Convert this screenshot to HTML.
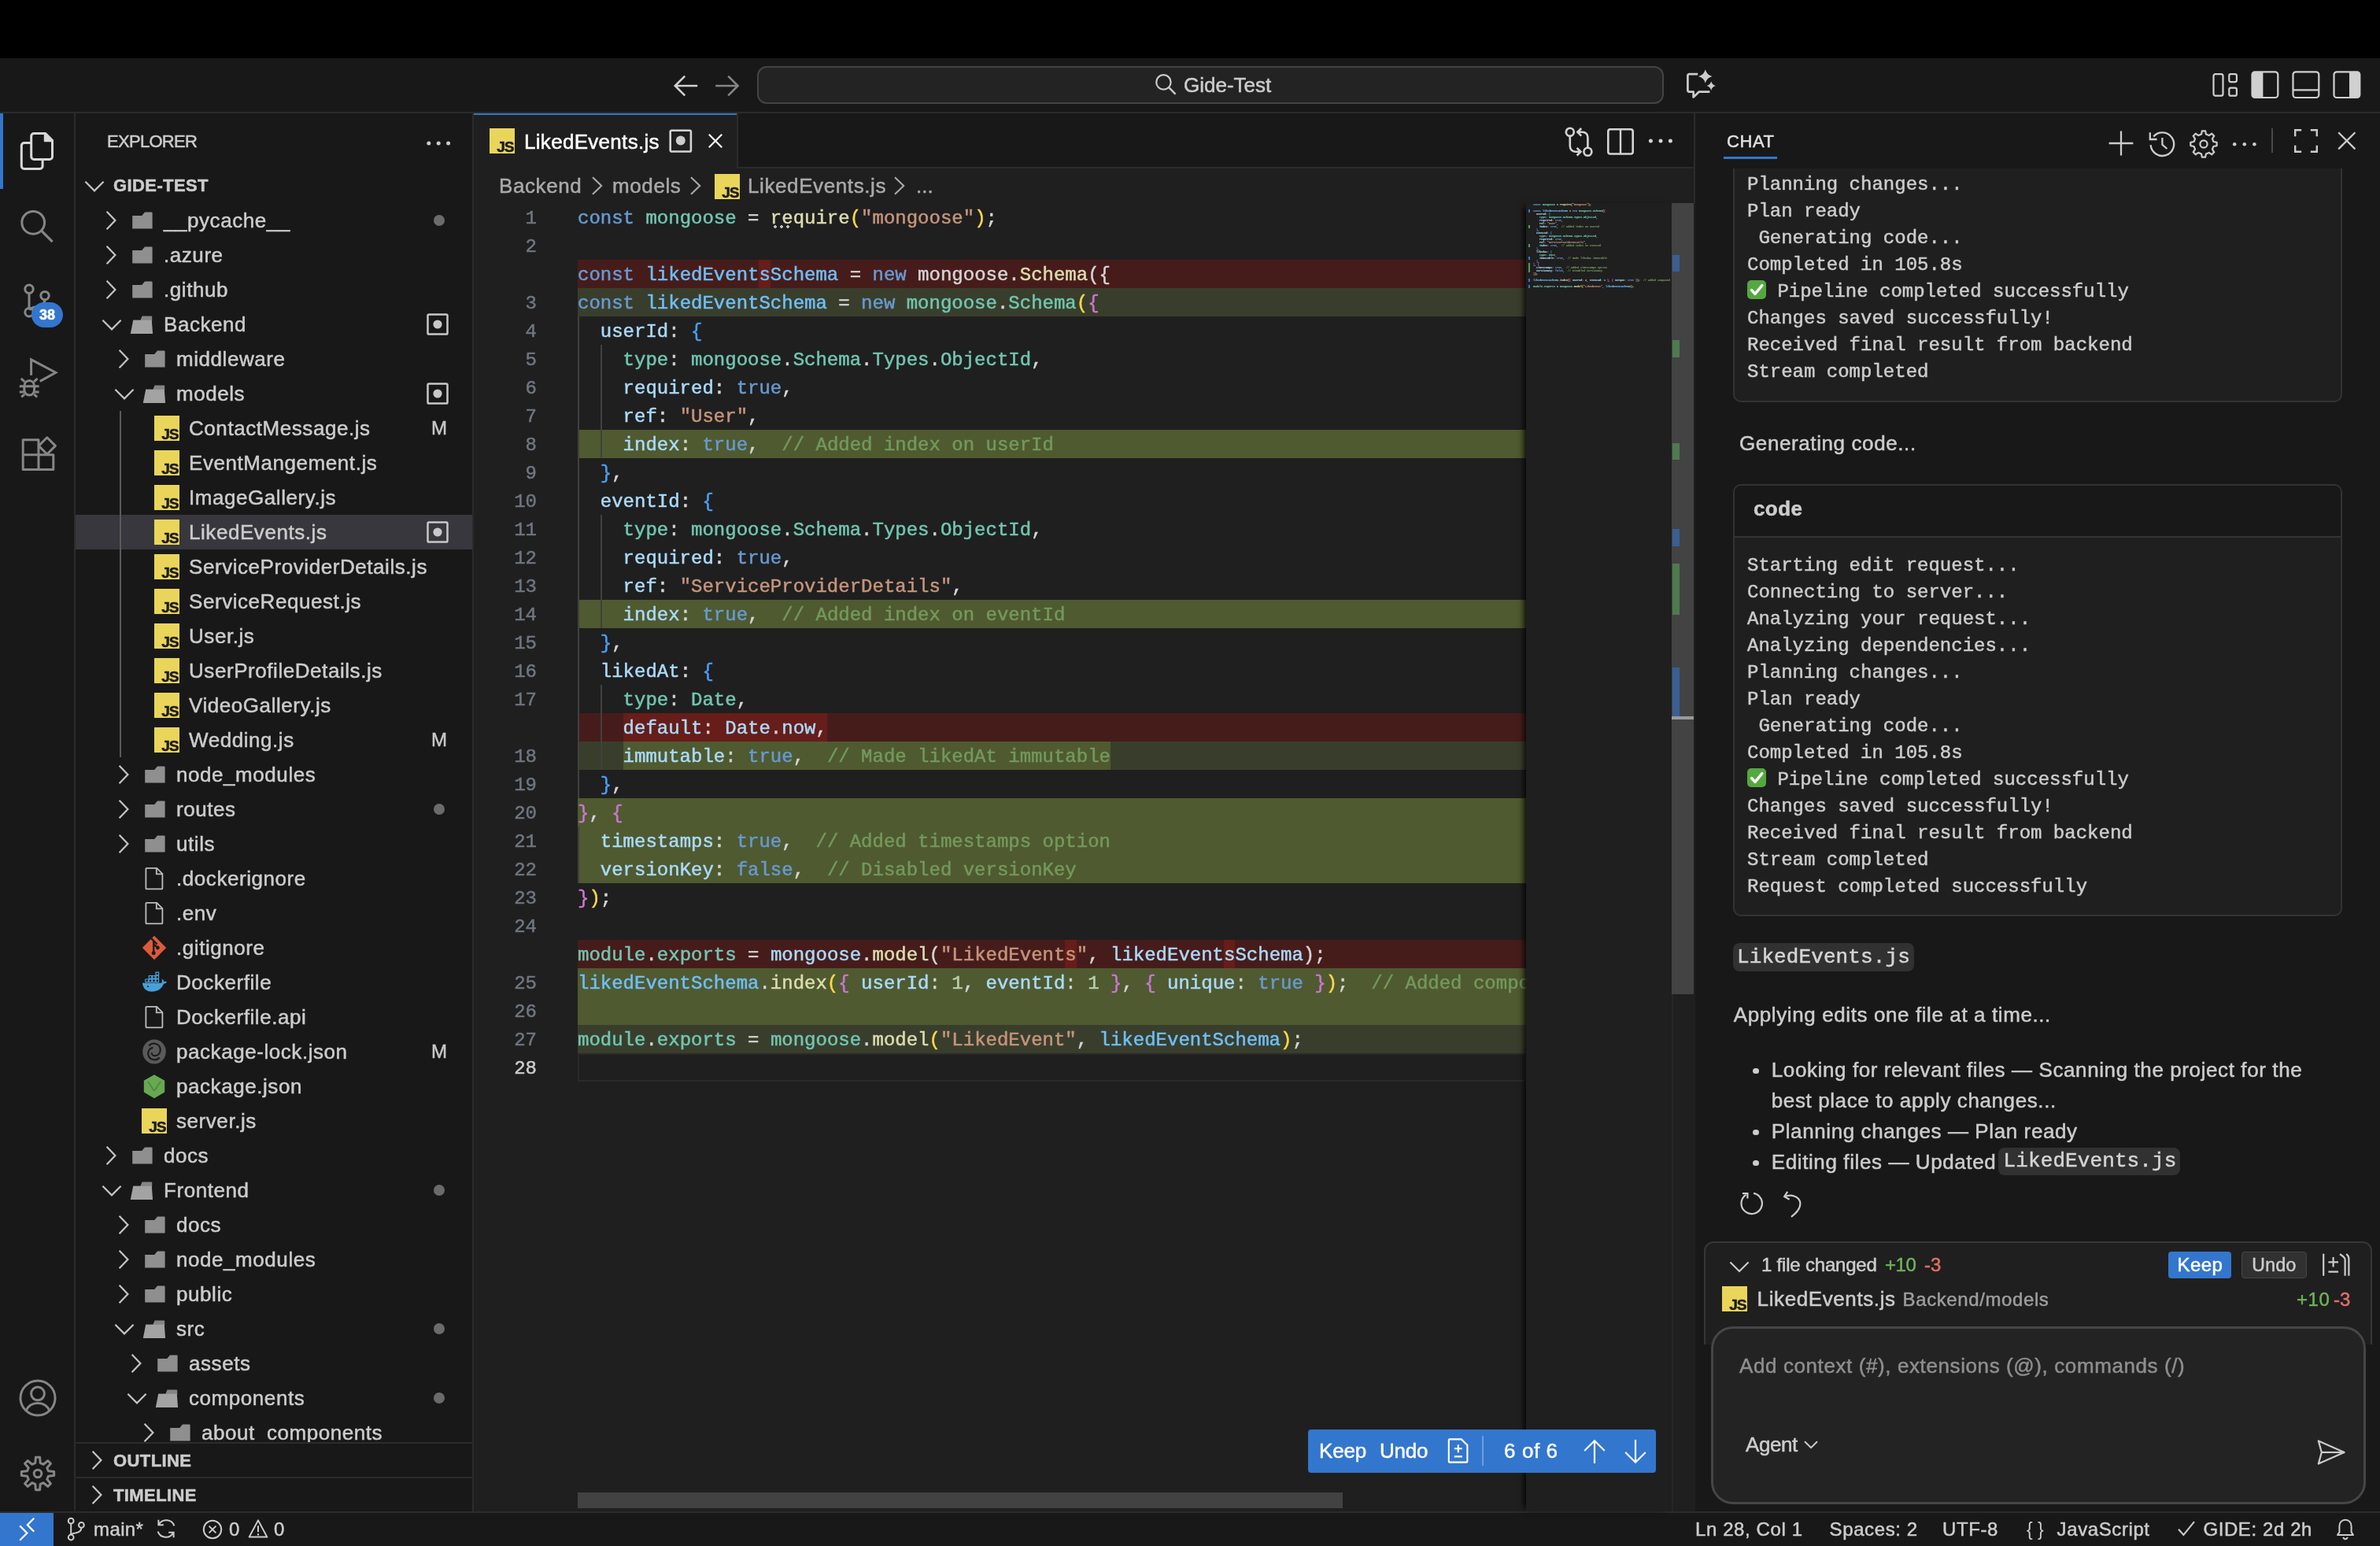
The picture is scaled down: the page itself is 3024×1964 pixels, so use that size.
<!DOCTYPE html><html><head><meta charset="utf-8"><style>
html,body{margin:0;padding:0;background:#000;overflow:hidden;width:3024px;height:1964px}
#root{position:absolute;left:0;top:0;width:1512px;height:982px;zoom:2;will-change:transform;-webkit-text-stroke:0.25px currentColor;background:#181818;font-family:"Liberation Sans",sans-serif;color:#cccccc;overflow:hidden;font-size:13px}
.a{position:absolute}
.mono{font-family:"Liberation Mono",monospace}
svg{position:absolute;overflow:visible}
.ln{position:absolute;left:301px;width:40px;text-align:right;height:18px;line-height:18px;font-family:"Liberation Mono",monospace;font-size:12px;color:#6f7680}
.cl{position:absolute;left:367px;height:18px;line-height:18px;font-family:"Liberation Mono",monospace;font-size:12px;white-space:pre;color:#cccccc}
.row{position:absolute;left:48px;width:252px;height:22px;line-height:22px;white-space:pre}
.lbl{position:absolute;top:0;letter-spacing:0.25px}
.k{color:#679ad1}.v{color:#aadafa}.c{color:#6fbff9}.f{color:#dcdcaf}.s{color:#c5947c}.t{color:#71c6b1}.cm{color:#74985c}.n{color:#bacdab}.p{color:#cccccc}.w{color:#d4d4d4}
.b1{color:#f9d849}.b2{color:#cc76d1}.b3{color:#4a9df8}
</style></head><body><div id="root"><div class="a" style="left:0;top:0;width:1512px;height:37px;background:#000"></div><div class="a" style="left:0;top:37px;width:1512px;height:34px;background:#181818;border-bottom:1px solid #2b2b2b"></div><svg style="left:427.5px;top:47px;width:17px;height:16px" viewBox="0 0 17 16" ><path d="M15.6 7.5H1.6M7.6 1.3L1.4 7.5l6.2 6.2" fill="none" stroke="#d0d0d0" stroke-width="1.3"/></svg><svg style="left:454px;top:47px;width:17px;height:16px" viewBox="0 0 17 16" ><path d="M0.6 7.5h14M8.6 1.3l6.2 6.2-6.2 6.2" fill="none" stroke="#858585" stroke-width="1.3"/></svg><div class="a" style="left:481px;top:42px;width:574px;height:22px;border:1px solid #444444;border-radius:6px;background:#232323"></div><svg style="left:733px;top:46px;width:15px;height:15px" viewBox="0 0 15 15" ><circle cx="6.2" cy="6.2" r="4.6" fill="none" stroke="#cccccc" stroke-width="1.1"/><path d="M9.6 9.6l4.2 4.2" stroke="#cccccc" stroke-width="1.2"/></svg><div class="a" style="left:752px;top:43px;height:22px;line-height:22px;font-size:13px;color:#cccccc;letter-spacing:0px">Gide-Test</div><svg style="left:1071px;top:45px;width:18px;height:18px" viewBox="0 0 18 18" ><path d="M7.6 2.1H2.2c-.6 0-1 .4-1 1v9.2c0 .6.4 1 1 1h2.6v3.4l3.6-3.4h6.8" fill="none" stroke="#cccccc" stroke-width="1.35" stroke-linejoin="round"/><path d="M12.4 -0.9000000000000004Q13.280000000000001 2.62 16.8 3.5Q13.280000000000001 4.38 12.4 7.9Q11.52 4.38 8.0 3.5Q11.52 2.62 12.4 -0.9000000000000004Z" fill="#cccccc"/><path d="M16.1 6.6Q16.68 8.92 19.0 9.5Q16.68 10.08 16.1 12.4Q15.520000000000001 10.08 13.200000000000001 9.5Q15.520000000000001 8.92 16.1 6.6Z" fill="#cccccc"/></svg><svg style="left:1405px;top:45px;width:18px;height:18px" viewBox="0 0 18 18" ><rect x="1.25" y="2.05" width="6.0" height="13.8" rx="1.2" fill="none" stroke="#d0d0d0" stroke-width="1.1"/><rect x="11.15" y="2.05" width="4.8" height="5.0" rx="1" fill="none" stroke="#d0d0d0" stroke-width="1.1"/><rect x="11.15" y="10.85" width="4.8" height="5.0" rx="1" fill="none" stroke="#d0d0d0" stroke-width="1.1"/></svg><svg style="left:1430px;top:45px;width:18px;height:18px" viewBox="0 0 18 18" ><rect x="0.75" y="0.65" width="16.4" height="16.35" rx="1.8" fill="none" stroke="#d0d0d0" stroke-width="1.1"/><path d="M7.7 0.65H2.55a1.8 1.8 0 0 0-1.8 1.8v12.75a1.8 1.8 0 0 0 1.8 1.8H7.7z" fill="#d0d0d0"/></svg><svg style="left:1456px;top:45px;width:18px;height:18px" viewBox="0 0 18 18" ><rect x="0.75" y="0.65" width="16.4" height="16.35" rx="1.8" fill="none" stroke="#d0d0d0" stroke-width="1.1"/><path d="M0.8 12.2h16.3" stroke="#d0d0d0" stroke-width="1.1"/></svg><svg style="left:1482px;top:45px;width:18px;height:18px" viewBox="0 0 18 18" ><rect x="0.75" y="0.65" width="16.4" height="16.35" rx="1.8" fill="none" stroke="#d0d0d0" stroke-width="1.1"/><path d="M10.5 0.65h4.85a1.8 1.8 0 0 1 1.8 1.8v12.75a1.8 1.8 0 0 1-1.8 1.8H10.5z" fill="#d0d0d0"/></svg><div class="a" style="left:47px;top:72px;width:1px;height:888px;background:#2b2b2b"></div><div class="a" style="left:300px;top:72px;width:1px;height:888px;background:#2b2b2b"></div><div class="a" style="left:1076px;top:72px;width:1px;height:888px;background:#2b2b2b"></div><div class="a" style="left:0;top:960px;width:1512px;height:21px;background:#181818;border-top:1px solid #2b2b2b"></div><div class="a" style="left:0;top:72px;width:2px;height:48px;background:#3376cd"></div><svg style="left:12px;top:84px;width:24px;height:24px" viewBox="0 0 24 24" ><path d="M9.6 0.75h7.3l4.35 4.35v10.4c0 1-.75 1.75-1.75 1.75H9.6c-1 0-1.75-.75-1.75-1.75V2.5c0-1 .75-1.75 1.75-1.75z" fill="none" stroke="#d7d7d7" stroke-width="1.5" stroke-linejoin="round"/><path d="M16.4 0.9v4.7h4.7z" fill="#d7d7d7" stroke="#d7d7d7" stroke-width="1" stroke-linejoin="round"/><path d="M7.85 6.75H3.4c-1 0-1.75.75-1.75 1.75V21.5c0 1 .75 1.75 1.75 1.75h9.9c1 0 1.75-.75 1.75-1.75V17.25" fill="none" stroke="#d7d7d7" stroke-width="1.5" stroke-linejoin="round"/></svg><svg style="left:11.5px;top:132px;width:24px;height:24px" viewBox="0 0 24 24" ><circle cx="9.6" cy="9.4" r="7.2" fill="none" stroke="#868686" stroke-width="1.5"/><path d="M14.8 14.6l7 7" stroke="#868686" stroke-width="1.6"/></svg><svg style="left:11px;top:179px;width:24px;height:24px" viewBox="0 0 24 24" ><circle cx="7.5" cy="4.6" r="2.6" fill="none" stroke="#868686" stroke-width="1.5"/><circle cx="17.5" cy="8.8" r="2.6" fill="none" stroke="#868686" stroke-width="1.5"/><circle cx="7.5" cy="19.4" r="2.6" fill="none" stroke="#868686" stroke-width="1.5"/><path d="M7.5 7.2v9.6M17.5 11.4c0 3.5-3.6 4.2-6.2 4.6-2 .3-3.2 1.2-3.6 2" fill="none" stroke="#868686" stroke-width="1.5"/></svg><div class="a" style="left:20px;top:192px;width:20px;height:16px;border-radius:8px;background:#3376cd;color:#fff;font-size:9px;font-weight:bold;line-height:16px;text-align:center">38</div><svg style="left:12px;top:228px;width:24px;height:24px" viewBox="0 0 24 24" ><path d="M7.8 10.4V0.4l15.6 8.2-10 5.6" fill="none" stroke="#868686" stroke-width="1.5" stroke-linejoin="miter"/><path d="M3.4 17.6c0-2.4 1.4-3.8 3.2-3.8s3.2 1.4 3.2 3.8v1.6c0 2.4-1.4 3.8-3.2 3.8s-3.2-1.4-3.2-3.8z" fill="none" stroke="#868686" stroke-width="1.5"/><path d="M0.4 17.4h12.4M0.4 21h3M9.8 21h3M3.6 14.4L1.4 12.4M9.6 14.4l2.2-2M3.6 22.4l-2 1.8M9.6 22.4l2 1.8" fill="none" stroke="#868686" stroke-width="1.5"/></svg><svg style="left:12px;top:276px;width:24px;height:24px" viewBox="0 0 24 24" ><path d="M2.6 3.4h9.9v9.5H2.6zM2.6 12.9h9.9v9.3H2.6zM12.5 12.9h9.4v9.3h-9.4z" fill="none" stroke="#868686" stroke-width="1.5" stroke-linejoin="round"/><path d="M17.9 1.9l5.3 5.3-5.3 5.3-5.3-5.3z" fill="none" stroke="#868686" stroke-width="1.5" stroke-linejoin="round"/></svg><svg style="left:12px;top:876px;width:24px;height:24px" viewBox="0 0 24 24" ><circle cx="12" cy="12" r="11" fill="none" stroke="#868686" stroke-width="1.5"/><circle cx="12" cy="9.2" r="4.2" fill="none" stroke="#868686" stroke-width="1.5"/><path d="M4.6 20c1.2-3 4-4.8 7.4-4.8s6.2 1.8 7.4 4.8" fill="none" stroke="#868686" stroke-width="1.5"/></svg><svg style="left:12px;top:924px;width:24px;height:24px" viewBox="0 0 24 24" ><path d="M18.71 10.39 L22.32 10.70 L22.32 13.30 L18.71 13.61 L17.88 15.61 L20.22 18.37 L18.37 20.22 L15.61 17.88 L13.61 18.71 L13.30 22.32 L10.70 22.32 L10.39 18.71 L8.39 17.88 L5.63 20.22 L3.78 18.37 L6.12 15.61 L5.29 13.61 L1.68 13.30 L1.68 10.70 L5.29 10.39 L6.12 8.39 L3.78 5.63 L5.63 3.78 L8.39 6.12 L10.39 5.29 L10.70 1.68 L13.30 1.68 L13.61 5.29 L15.61 6.12 L18.37 3.78 L20.22 5.63 L17.88 8.39Z" fill="none" stroke="#868686" stroke-width="1.5" stroke-linejoin="round"/><circle cx="12" cy="12" r="2.4" fill="none" stroke="#868686" stroke-width="1.5"/></svg><div class="a" style="left:68px;top:80px;height:20px;line-height:20px;font-size:11px;color:#cccccc;letter-spacing:-0.35px">EXPLORER</div><svg style="left:270px;top:83px;width:18px;height:16px" viewBox="0 0 18 16" ><circle cx="2.4" cy="8" r="1.25" fill="#cccccc"/><circle cx="8.6" cy="8" r="1.25" fill="#cccccc"/><circle cx="14.8" cy="8" r="1.25" fill="#cccccc"/></svg><svg style="left:52px;top:110px;width:16px;height:16px" viewBox="0 0 16 16" ><path d="M2.2 5.4l5.8 5.8 5.8-5.8" fill="none" stroke="#c5c5c5" stroke-width="1.1"/></svg><div class="a" style="left:72px;top:107px;height:22px;line-height:22px;font-size:11px;font-weight:bold;color:#cccccc;letter-spacing:0.2px">GIDE-TEST</div><div class="a" style="left:48px;top:327px;width:252px;height:22px;background:#37373d"></div><div class="a" style="left:76px;top:261px;width:1px;height:220px;background:#5a5a5a"></div><svg style="left:62px;top:132px;width:16px;height:16px" viewBox="0 0 16 16" ><path d="M5.8 2.4l5.4 5.6-5.4 5.6" fill="none" stroke="#c5c5c5" stroke-width="1.1"/></svg><svg style="left:82px;top:132px;width:16px;height:16px" viewBox="0 0 16 16" ><path d="M2.1 5H8.1L10 2.7H14.3Q14.8 2.7 14.8 3.2V13.2H2.1Z" fill="#8f8f8f"/></svg><div class="a" style="left:104px;top:129px;height:22px;line-height:22px;font-size:13px;color:#cccccc;letter-spacing:0.28px;white-space:pre">__pycache__</div><div class="a" style="left:275.3px;top:136.3px;width:7.4px;height:7.4px;border-radius:50%;background:#6b6b6b"></div><svg style="left:62px;top:154px;width:16px;height:16px" viewBox="0 0 16 16" ><path d="M5.8 2.4l5.4 5.6-5.4 5.6" fill="none" stroke="#c5c5c5" stroke-width="1.1"/></svg><svg style="left:82px;top:154px;width:16px;height:16px" viewBox="0 0 16 16" ><path d="M2.1 5H8.1L10 2.7H14.3Q14.8 2.7 14.8 3.2V13.2H2.1Z" fill="#8f8f8f"/></svg><div class="a" style="left:104px;top:151px;height:22px;line-height:22px;font-size:13px;color:#cccccc;letter-spacing:0.28px;white-space:pre">.azure</div><svg style="left:62px;top:176px;width:16px;height:16px" viewBox="0 0 16 16" ><path d="M5.8 2.4l5.4 5.6-5.4 5.6" fill="none" stroke="#c5c5c5" stroke-width="1.1"/></svg><svg style="left:82px;top:176px;width:16px;height:16px" viewBox="0 0 16 16" ><path d="M2.1 5H8.1L10 2.7H14.3Q14.8 2.7 14.8 3.2V13.2H2.1Z" fill="#8f8f8f"/></svg><div class="a" style="left:104px;top:173px;height:22px;line-height:22px;font-size:13px;color:#cccccc;letter-spacing:0.28px;white-space:pre">.github</div><svg style="left:63px;top:198px;width:16px;height:16px" viewBox="0 0 16 16" ><path d="M2.2 5.4l5.8 5.8 5.8-5.8" fill="none" stroke="#c5c5c5" stroke-width="1.1"/></svg><svg style="left:82px;top:198px;width:16px;height:16px" viewBox="0 0 16 16" ><path d="M2.6 5.4H7.2L8.25 2.7H14.2Q14.6 2.7 14.6 3.1V6H2.6Z" fill="#858585"/><path d="M2.6 5.4H14.4L15.05 14.05H0.9Z" fill="#a3a3a3"/></svg><div class="a" style="left:104px;top:195px;height:22px;line-height:22px;font-size:13px;color:#cccccc;letter-spacing:0.28px;white-space:pre">Backend</div><svg style="left:271px;top:199px;width:14px;height:14px" viewBox="0 0 14 14" ><rect x="0.75" y="0.75" width="12.5" height="12.5" rx="0.8" fill="none" stroke="#c8c8c8" stroke-width="1.25"/><circle cx="7" cy="7" r="2.8" fill="#c8c8c8"/></svg><svg style="left:70px;top:220px;width:16px;height:16px" viewBox="0 0 16 16" ><path d="M5.8 2.4l5.4 5.6-5.4 5.6" fill="none" stroke="#c5c5c5" stroke-width="1.1"/></svg><svg style="left:90px;top:220px;width:16px;height:16px" viewBox="0 0 16 16" ><path d="M2.1 5H8.1L10 2.7H14.3Q14.8 2.7 14.8 3.2V13.2H2.1Z" fill="#8f8f8f"/></svg><div class="a" style="left:112px;top:217px;height:22px;line-height:22px;font-size:13px;color:#cccccc;letter-spacing:0.28px;white-space:pre">middleware</div><svg style="left:71px;top:242px;width:16px;height:16px" viewBox="0 0 16 16" ><path d="M2.2 5.4l5.8 5.8 5.8-5.8" fill="none" stroke="#c5c5c5" stroke-width="1.1"/></svg><svg style="left:90px;top:242px;width:16px;height:16px" viewBox="0 0 16 16" ><path d="M2.6 5.4H7.2L8.25 2.7H14.2Q14.6 2.7 14.6 3.1V6H2.6Z" fill="#858585"/><path d="M2.6 5.4H14.4L15.05 14.05H0.9Z" fill="#a3a3a3"/></svg><div class="a" style="left:112px;top:239px;height:22px;line-height:22px;font-size:13px;color:#cccccc;letter-spacing:0.28px;white-space:pre">models</div><svg style="left:271px;top:243px;width:14px;height:14px" viewBox="0 0 14 14" ><rect x="0.75" y="0.75" width="12.5" height="12.5" rx="0.8" fill="none" stroke="#c8c8c8" stroke-width="1.25"/><circle cx="7" cy="7" r="2.8" fill="#c8c8c8"/></svg><div class="a" style="left:98px;top:264.1px;width:16px;height:16px;background:#ead55b;overflow:hidden"><div class="a" style="right:0.8px;bottom:-0.7px;font-family:'Liberation Sans';font-weight:bold;font-size:9.6px;line-height:9.6px;color:#1c1c1c;letter-spacing:-0.6px">JS</div></div><div class="a" style="left:120px;top:261px;height:22px;line-height:22px;font-size:13px;color:#cccccc;letter-spacing:0.28px;white-space:pre">ContactMessage.js</div><div class="a" style="left:274px;top:261px;height:22px;line-height:22px;font-size:12px;color:#c8c8c8">M</div><div class="a" style="left:98px;top:286.1px;width:16px;height:16px;background:#ead55b;overflow:hidden"><div class="a" style="right:0.8px;bottom:-0.7px;font-family:'Liberation Sans';font-weight:bold;font-size:9.6px;line-height:9.6px;color:#1c1c1c;letter-spacing:-0.6px">JS</div></div><div class="a" style="left:120px;top:283px;height:22px;line-height:22px;font-size:13px;color:#cccccc;letter-spacing:0.28px;white-space:pre">EventMangement.js</div><div class="a" style="left:98px;top:308.1px;width:16px;height:16px;background:#ead55b;overflow:hidden"><div class="a" style="right:0.8px;bottom:-0.7px;font-family:'Liberation Sans';font-weight:bold;font-size:9.6px;line-height:9.6px;color:#1c1c1c;letter-spacing:-0.6px">JS</div></div><div class="a" style="left:120px;top:305px;height:22px;line-height:22px;font-size:13px;color:#cccccc;letter-spacing:0.28px;white-space:pre">ImageGallery.js</div><div class="a" style="left:98px;top:330.1px;width:16px;height:16px;background:#ead55b;overflow:hidden"><div class="a" style="right:0.8px;bottom:-0.7px;font-family:'Liberation Sans';font-weight:bold;font-size:9.6px;line-height:9.6px;color:#1c1c1c;letter-spacing:-0.6px">JS</div></div><div class="a" style="left:120px;top:327px;height:22px;line-height:22px;font-size:13px;color:#cccccc;letter-spacing:0.28px;white-space:pre">LikedEvents.js</div><svg style="left:271px;top:331px;width:14px;height:14px" viewBox="0 0 14 14" ><rect x="0.75" y="0.75" width="12.5" height="12.5" rx="0.8" fill="none" stroke="#c8c8c8" stroke-width="1.25"/><circle cx="7" cy="7" r="2.8" fill="#c8c8c8"/></svg><div class="a" style="left:98px;top:352.1px;width:16px;height:16px;background:#ead55b;overflow:hidden"><div class="a" style="right:0.8px;bottom:-0.7px;font-family:'Liberation Sans';font-weight:bold;font-size:9.6px;line-height:9.6px;color:#1c1c1c;letter-spacing:-0.6px">JS</div></div><div class="a" style="left:120px;top:349px;height:22px;line-height:22px;font-size:13px;color:#cccccc;letter-spacing:0.28px;white-space:pre">ServiceProviderDetails.js</div><div class="a" style="left:98px;top:374.1px;width:16px;height:16px;background:#ead55b;overflow:hidden"><div class="a" style="right:0.8px;bottom:-0.7px;font-family:'Liberation Sans';font-weight:bold;font-size:9.6px;line-height:9.6px;color:#1c1c1c;letter-spacing:-0.6px">JS</div></div><div class="a" style="left:120px;top:371px;height:22px;line-height:22px;font-size:13px;color:#cccccc;letter-spacing:0.28px;white-space:pre">ServiceRequest.js</div><div class="a" style="left:98px;top:396.1px;width:16px;height:16px;background:#ead55b;overflow:hidden"><div class="a" style="right:0.8px;bottom:-0.7px;font-family:'Liberation Sans';font-weight:bold;font-size:9.6px;line-height:9.6px;color:#1c1c1c;letter-spacing:-0.6px">JS</div></div><div class="a" style="left:120px;top:393px;height:22px;line-height:22px;font-size:13px;color:#cccccc;letter-spacing:0.28px;white-space:pre">User.js</div><div class="a" style="left:98px;top:418.1px;width:16px;height:16px;background:#ead55b;overflow:hidden"><div class="a" style="right:0.8px;bottom:-0.7px;font-family:'Liberation Sans';font-weight:bold;font-size:9.6px;line-height:9.6px;color:#1c1c1c;letter-spacing:-0.6px">JS</div></div><div class="a" style="left:120px;top:415px;height:22px;line-height:22px;font-size:13px;color:#cccccc;letter-spacing:0.28px;white-space:pre">UserProfileDetails.js</div><div class="a" style="left:98px;top:440.1px;width:16px;height:16px;background:#ead55b;overflow:hidden"><div class="a" style="right:0.8px;bottom:-0.7px;font-family:'Liberation Sans';font-weight:bold;font-size:9.6px;line-height:9.6px;color:#1c1c1c;letter-spacing:-0.6px">JS</div></div><div class="a" style="left:120px;top:437px;height:22px;line-height:22px;font-size:13px;color:#cccccc;letter-spacing:0.28px;white-space:pre">VideoGallery.js</div><div class="a" style="left:98px;top:462.1px;width:16px;height:16px;background:#ead55b;overflow:hidden"><div class="a" style="right:0.8px;bottom:-0.7px;font-family:'Liberation Sans';font-weight:bold;font-size:9.6px;line-height:9.6px;color:#1c1c1c;letter-spacing:-0.6px">JS</div></div><div class="a" style="left:120px;top:459px;height:22px;line-height:22px;font-size:13px;color:#cccccc;letter-spacing:0.28px;white-space:pre">Wedding.js</div><div class="a" style="left:274px;top:459px;height:22px;line-height:22px;font-size:12px;color:#c8c8c8">M</div><svg style="left:70px;top:484px;width:16px;height:16px" viewBox="0 0 16 16" ><path d="M5.8 2.4l5.4 5.6-5.4 5.6" fill="none" stroke="#c5c5c5" stroke-width="1.1"/></svg><svg style="left:90px;top:484px;width:16px;height:16px" viewBox="0 0 16 16" ><path d="M2.1 5H8.1L10 2.7H14.3Q14.8 2.7 14.8 3.2V13.2H2.1Z" fill="#8f8f8f"/></svg><div class="a" style="left:112px;top:481px;height:22px;line-height:22px;font-size:13px;color:#cccccc;letter-spacing:0.28px;white-space:pre">node_modules</div><svg style="left:70px;top:506px;width:16px;height:16px" viewBox="0 0 16 16" ><path d="M5.8 2.4l5.4 5.6-5.4 5.6" fill="none" stroke="#c5c5c5" stroke-width="1.1"/></svg><svg style="left:90px;top:506px;width:16px;height:16px" viewBox="0 0 16 16" ><path d="M2.1 5H8.1L10 2.7H14.3Q14.8 2.7 14.8 3.2V13.2H2.1Z" fill="#8f8f8f"/></svg><div class="a" style="left:112px;top:503px;height:22px;line-height:22px;font-size:13px;color:#cccccc;letter-spacing:0.28px;white-space:pre">routes</div><div class="a" style="left:275.3px;top:510.3px;width:7.4px;height:7.4px;border-radius:50%;background:#6b6b6b"></div><svg style="left:70px;top:528px;width:16px;height:16px" viewBox="0 0 16 16" ><path d="M5.8 2.4l5.4 5.6-5.4 5.6" fill="none" stroke="#c5c5c5" stroke-width="1.1"/></svg><svg style="left:90px;top:528px;width:16px;height:16px" viewBox="0 0 16 16" ><path d="M2.1 5H8.1L10 2.7H14.3Q14.8 2.7 14.8 3.2V13.2H2.1Z" fill="#8f8f8f"/></svg><div class="a" style="left:112px;top:525px;height:22px;line-height:22px;font-size:13px;color:#cccccc;letter-spacing:0.28px;white-space:pre">utils</div><svg style="left:90px;top:550px;width:16px;height:16px" viewBox="0 0 16 16" ><path d="M3.2 1.4h6.4l3.6 3.6v9.2c0 .3-.2.5-.5.5H3.2c-.3 0-.5-.2-.5-.5V1.9c0-.3.2-.5.5-.5z" fill="none" stroke="#bdbdbd" stroke-width="0.9"/><path d="M9.4 1.6v3.6h3.6" fill="none" stroke="#bdbdbd" stroke-width="0.9"/></svg><div class="a" style="left:112px;top:547px;height:22px;line-height:22px;font-size:13px;color:#cccccc;letter-spacing:0.28px;white-space:pre">.dockerignore</div><svg style="left:90px;top:572px;width:16px;height:16px" viewBox="0 0 16 16" ><path d="M3.2 1.4h6.4l3.6 3.6v9.2c0 .3-.2.5-.5.5H3.2c-.3 0-.5-.2-.5-.5V1.9c0-.3.2-.5.5-.5z" fill="none" stroke="#bdbdbd" stroke-width="0.9"/><path d="M9.4 1.6v3.6h3.6" fill="none" stroke="#bdbdbd" stroke-width="0.9"/></svg><div class="a" style="left:112px;top:569px;height:22px;line-height:22px;font-size:13px;color:#cccccc;letter-spacing:0.28px;white-space:pre">.env</div><svg style="left:90px;top:594px;width:16px;height:16px" viewBox="0 0 16 16" ><path d="M8 0.4l7.6 7.6L8 15.6 0.4 8z" fill="#dc5a3b"/><path d="M5.6 1.6l4.2 4.2M7.6 3.6v7.6M7.6 5.8l2.4 2" stroke="#1c1c1c" stroke-width="1.2"/><circle cx="10.2" cy="8" r="1.2" fill="#1c1c1c"/><circle cx="7.6" cy="11.4" r="1.25" fill="#1c1c1c"/></svg><div class="a" style="left:112px;top:591px;height:22px;line-height:22px;font-size:13px;color:#cccccc;letter-spacing:0.28px;white-space:pre">.gitignore</div><svg style="left:90px;top:616px;width:16px;height:16px" viewBox="0 0 16 16" ><path d="M0.4 8.4h12.2c.4-.8.4-1.8.2-2.6.8.3 1.2 1 1.3 1.8.7-.3 1.4-.2 1.9.2-.5.8-1.3 1.1-2 1.1-1.2 3.2-4 5-7.6 5-3 0-5.4-1.6-6-5.5z" fill="#47a0d8"/><path d="M2.4 6h1.8v1.8H2.4zM4.6 6h1.8v1.8H4.6zM6.8 6h1.8v1.8H6.8zM9 6h1.8v1.8H9zM4.6 3.8h1.8v1.8H4.6zM6.8 3.8h1.8v1.8H6.8zM9 3.8h1.8v1.8H9zM9 1.6h1.8v1.8H9z" fill="none" stroke="#47a0d8" stroke-width="0.6"/><circle cx="4" cy="10.6" r="0.5" fill="#1c1c1c"/></svg><div class="a" style="left:112px;top:613px;height:22px;line-height:22px;font-size:13px;color:#cccccc;letter-spacing:0.28px;white-space:pre">Dockerfile</div><svg style="left:90px;top:638px;width:16px;height:16px" viewBox="0 0 16 16" ><path d="M3.2 1.4h6.4l3.6 3.6v9.2c0 .3-.2.5-.5.5H3.2c-.3 0-.5-.2-.5-.5V1.9c0-.3.2-.5.5-.5z" fill="none" stroke="#bdbdbd" stroke-width="0.9"/><path d="M9.4 1.6v3.6h3.6" fill="none" stroke="#bdbdbd" stroke-width="0.9"/></svg><div class="a" style="left:112px;top:635px;height:22px;line-height:22px;font-size:13px;color:#cccccc;letter-spacing:0.28px;white-space:pre">Dockerfile.api</div><svg style="left:90px;top:660px;width:16px;height:16px" viewBox="0 0 16 16" ><ellipse cx="8" cy="8" rx="7.4" ry="7.8" fill="#5a5a5a"/><path d="M4.6 4.2c2.4-2.4 6.6-1.4 7.2 1.8.5 2.4-1 4.4-3 4.6-1.6.2-2.6-.8-2.4-2" fill="none" stroke="#1c1c1c" stroke-width="1.1"/><path d="M11.4 11.8c-2.4 2.4-6.6 1.4-7.2-1.8-.5-2.4 1-4.4 3-4.6" fill="none" stroke="#1c1c1c" stroke-width="1.1"/></svg><div class="a" style="left:112px;top:657px;height:22px;line-height:22px;font-size:13px;color:#cccccc;letter-spacing:0.28px;white-space:pre">package-lock.json</div><div class="a" style="left:274px;top:657px;height:22px;line-height:22px;font-size:12px;color:#c8c8c8">M</div><svg style="left:90px;top:682px;width:16px;height:16px" viewBox="0 0 16 16" ><path d="M8 0.6l6.6 3.8v7.4L8 15.6 1.4 11.8V4.4z" fill="#67a851"/><path d="M4 5l4 6M12 5l-4 6" stroke="#4d8a3c" stroke-width="0.8"/></svg><div class="a" style="left:112px;top:679px;height:22px;line-height:22px;font-size:13px;color:#cccccc;letter-spacing:0.28px;white-space:pre">package.json</div><div class="a" style="left:90px;top:704.1px;width:16px;height:16px;background:#ead55b;overflow:hidden"><div class="a" style="right:0.8px;bottom:-0.7px;font-family:'Liberation Sans';font-weight:bold;font-size:9.6px;line-height:9.6px;color:#1c1c1c;letter-spacing:-0.6px">JS</div></div><div class="a" style="left:112px;top:701px;height:22px;line-height:22px;font-size:13px;color:#cccccc;letter-spacing:0.28px;white-space:pre">server.js</div><svg style="left:62px;top:726px;width:16px;height:16px" viewBox="0 0 16 16" ><path d="M5.8 2.4l5.4 5.6-5.4 5.6" fill="none" stroke="#c5c5c5" stroke-width="1.1"/></svg><svg style="left:82px;top:726px;width:16px;height:16px" viewBox="0 0 16 16" ><path d="M2.1 5H8.1L10 2.7H14.3Q14.8 2.7 14.8 3.2V13.2H2.1Z" fill="#8f8f8f"/></svg><div class="a" style="left:104px;top:723px;height:22px;line-height:22px;font-size:13px;color:#cccccc;letter-spacing:0.28px;white-space:pre">docs</div><svg style="left:63px;top:748px;width:16px;height:16px" viewBox="0 0 16 16" ><path d="M2.2 5.4l5.8 5.8 5.8-5.8" fill="none" stroke="#c5c5c5" stroke-width="1.1"/></svg><svg style="left:82px;top:748px;width:16px;height:16px" viewBox="0 0 16 16" ><path d="M2.6 5.4H7.2L8.25 2.7H14.2Q14.6 2.7 14.6 3.1V6H2.6Z" fill="#858585"/><path d="M2.6 5.4H14.4L15.05 14.05H0.9Z" fill="#a3a3a3"/></svg><div class="a" style="left:104px;top:745px;height:22px;line-height:22px;font-size:13px;color:#cccccc;letter-spacing:0.28px;white-space:pre">Frontend</div><div class="a" style="left:275.3px;top:752.3px;width:7.4px;height:7.4px;border-radius:50%;background:#6b6b6b"></div><svg style="left:70px;top:770px;width:16px;height:16px" viewBox="0 0 16 16" ><path d="M5.8 2.4l5.4 5.6-5.4 5.6" fill="none" stroke="#c5c5c5" stroke-width="1.1"/></svg><svg style="left:90px;top:770px;width:16px;height:16px" viewBox="0 0 16 16" ><path d="M2.1 5H8.1L10 2.7H14.3Q14.8 2.7 14.8 3.2V13.2H2.1Z" fill="#8f8f8f"/></svg><div class="a" style="left:112px;top:767px;height:22px;line-height:22px;font-size:13px;color:#cccccc;letter-spacing:0.28px;white-space:pre">docs</div><svg style="left:70px;top:792px;width:16px;height:16px" viewBox="0 0 16 16" ><path d="M5.8 2.4l5.4 5.6-5.4 5.6" fill="none" stroke="#c5c5c5" stroke-width="1.1"/></svg><svg style="left:90px;top:792px;width:16px;height:16px" viewBox="0 0 16 16" ><path d="M2.1 5H8.1L10 2.7H14.3Q14.8 2.7 14.8 3.2V13.2H2.1Z" fill="#8f8f8f"/></svg><div class="a" style="left:112px;top:789px;height:22px;line-height:22px;font-size:13px;color:#cccccc;letter-spacing:0.28px;white-space:pre">node_modules</div><svg style="left:70px;top:814px;width:16px;height:16px" viewBox="0 0 16 16" ><path d="M5.8 2.4l5.4 5.6-5.4 5.6" fill="none" stroke="#c5c5c5" stroke-width="1.1"/></svg><svg style="left:90px;top:814px;width:16px;height:16px" viewBox="0 0 16 16" ><path d="M2.1 5H8.1L10 2.7H14.3Q14.8 2.7 14.8 3.2V13.2H2.1Z" fill="#8f8f8f"/></svg><div class="a" style="left:112px;top:811px;height:22px;line-height:22px;font-size:13px;color:#cccccc;letter-spacing:0.28px;white-space:pre">public</div><svg style="left:71px;top:836px;width:16px;height:16px" viewBox="0 0 16 16" ><path d="M2.2 5.4l5.8 5.8 5.8-5.8" fill="none" stroke="#c5c5c5" stroke-width="1.1"/></svg><svg style="left:90px;top:836px;width:16px;height:16px" viewBox="0 0 16 16" ><path d="M2.6 5.4H7.2L8.25 2.7H14.2Q14.6 2.7 14.6 3.1V6H2.6Z" fill="#858585"/><path d="M2.6 5.4H14.4L15.05 14.05H0.9Z" fill="#a3a3a3"/></svg><div class="a" style="left:112px;top:833px;height:22px;line-height:22px;font-size:13px;color:#cccccc;letter-spacing:0.28px;white-space:pre">src</div><div class="a" style="left:275.3px;top:840.3px;width:7.4px;height:7.4px;border-radius:50%;background:#6b6b6b"></div><svg style="left:78px;top:858px;width:16px;height:16px" viewBox="0 0 16 16" ><path d="M5.8 2.4l5.4 5.6-5.4 5.6" fill="none" stroke="#c5c5c5" stroke-width="1.1"/></svg><svg style="left:98px;top:858px;width:16px;height:16px" viewBox="0 0 16 16" ><path d="M2.1 5H8.1L10 2.7H14.3Q14.8 2.7 14.8 3.2V13.2H2.1Z" fill="#8f8f8f"/></svg><div class="a" style="left:120px;top:855px;height:22px;line-height:22px;font-size:13px;color:#cccccc;letter-spacing:0.28px;white-space:pre">assets</div><svg style="left:79px;top:880px;width:16px;height:16px" viewBox="0 0 16 16" ><path d="M2.2 5.4l5.8 5.8 5.8-5.8" fill="none" stroke="#c5c5c5" stroke-width="1.1"/></svg><svg style="left:98px;top:880px;width:16px;height:16px" viewBox="0 0 16 16" ><path d="M2.6 5.4H7.2L8.25 2.7H14.2Q14.6 2.7 14.6 3.1V6H2.6Z" fill="#858585"/><path d="M2.6 5.4H14.4L15.05 14.05H0.9Z" fill="#a3a3a3"/></svg><div class="a" style="left:120px;top:877px;height:22px;line-height:22px;font-size:13px;color:#cccccc;letter-spacing:0.28px;white-space:pre">components</div><div class="a" style="left:275.3px;top:884.3px;width:7.4px;height:7.4px;border-radius:50%;background:#6b6b6b"></div><svg style="left:86px;top:902px;width:16px;height:16px" viewBox="0 0 16 16" ><path d="M5.8 2.4l5.4 5.6-5.4 5.6" fill="none" stroke="#c5c5c5" stroke-width="1.1"/></svg><svg style="left:106px;top:902px;width:16px;height:16px" viewBox="0 0 16 16" ><path d="M2.1 5H8.1L10 2.7H14.3Q14.8 2.7 14.8 3.2V13.2H2.1Z" fill="#8f8f8f"/></svg><div class="a" style="left:128px;top:899px;height:22px;line-height:22px;font-size:13px;color:#cccccc;letter-spacing:0.28px;white-space:pre">about_components</div><div class="a" style="left:48px;top:916px;width:252px;height:44px;background:#181818"></div><div class="a" style="left:48px;top:916px;width:252px;height:1px;background:#2b2b2b"></div><div class="a" style="left:48px;top:938px;width:252px;height:1px;background:#2b2b2b"></div><svg style="left:53px;top:919.5px;width:16px;height:16px" viewBox="0 0 16 16" ><path d="M5.8 2.4l5.4 5.6-5.4 5.6" fill="none" stroke="#c5c5c5" stroke-width="1.1"/></svg><svg style="left:53px;top:941.5px;width:16px;height:16px" viewBox="0 0 16 16" ><path d="M5.8 2.4l5.4 5.6-5.4 5.6" fill="none" stroke="#c5c5c5" stroke-width="1.1"/></svg><div class="a" style="left:72px;top:917px;height:22px;line-height:22px;font-size:11px;font-weight:bold;color:#cccccc;letter-spacing:0.2px">OUTLINE</div><div class="a" style="left:72px;top:939px;height:22px;line-height:22px;font-size:11px;font-weight:bold;color:#cccccc;letter-spacing:0.2px">TIMELINE</div><div class="a" style="left:301px;top:72px;width:775px;height:888px;background:#1f1f1f"></div><div class="a" style="left:301px;top:72px;width:775px;height:34px;background:#181818;border-bottom:1px solid #2b2b2b"></div><div class="a" style="left:301px;top:72px;width:167px;height:35px;background:#1f1f1f;border-right:1px solid #2b2b2b"></div><div class="a" style="left:301px;top:72px;width:167px;height:1px;background:#3376cd"></div><div class="a" style="left:311px;top:81.5px;width:16px;height:16px;background:#ead55b;overflow:hidden"><div class="a" style="right:0.8px;bottom:-0.7px;font-family:'Liberation Sans';font-weight:bold;font-size:9.6px;line-height:9.6px;color:#1c1c1c;letter-spacing:-0.6px">JS</div></div><div class="a" style="left:333px;top:79px;height:22px;line-height:22px;font-size:13px;color:#ffffff;letter-spacing:0.15px">LikedEvents.js</div><svg style="left:425px;top:82px;width:15px;height:15px" viewBox="0 0 15 15" ><rect x="0.85" y="0.85" width="13.1" height="13.4" rx="0.8" fill="none" stroke="#d4d4d4" stroke-width="1.3"/><circle cx="7.4" cy="7.3" r="3" fill="#cccccc"/></svg><svg style="left:450px;top:85px;width:9px;height:9px" viewBox="0 0 9 9" ><path d="M0.4 0.4l8.2 8.2M8.6 0.4L0.4 8.6" stroke="#f0f0f0" stroke-width="1.15"/></svg><svg style="left:993px;top:81px;width:19px;height:18px" viewBox="0 0 19 18" ><circle cx="4.4" cy="2.9" r="2.5" fill="none" stroke="#d4d4d4" stroke-width="1.3"/><circle cx="15.7" cy="15.35" r="2.5" fill="none" stroke="#d4d4d4" stroke-width="1.3"/><path d="M4.4 5.4v6.4c0 2 1.4 3.55 3.4 3.55h3.4M8.8 12.95l2.4 2.4-2.4 2.4M15.7 12.85V6.3c0-2-1.4-3.4-3.4-3.4H9.2M11.6 0.5L9.2 2.9l2.4 2.4" fill="none" stroke="#d4d4d4" stroke-width="1.3"/></svg><svg style="left:1021px;top:81.5px;width:17px;height:17px" viewBox="0 0 17 17" ><rect x="0.65" y="0.65" width="15.7" height="15.6" rx="1.4" fill="none" stroke="#d4d4d4" stroke-width="1.3"/><path d="M8.5 0.8v15.4" stroke="#d4d4d4" stroke-width="1.2"/></svg><svg style="left:1047px;top:81.5px;width:17px;height:16px" viewBox="0 0 17 16" ><circle cx="1.7" cy="8" r="1.25" fill="#d4d4d4"/><circle cx="8" cy="8" r="1.25" fill="#d4d4d4"/><circle cx="14.2" cy="8" r="1.25" fill="#d4d4d4"/></svg><div class="a" style="left:317px;top:107px;height:22px;line-height:22px;font-size:13px;color:#a9a9a9;letter-spacing:0.3px">Backend</div><svg style="left:373.5px;top:112px;width:12px;height:12px" viewBox="0 0 12 12" ><path d="M3 0.6l5.6 5.4L3 11.4" fill="none" stroke="#a9a9a9" stroke-width="1.05"/></svg><div class="a" style="left:389px;top:107px;height:22px;line-height:22px;font-size:13px;color:#a9a9a9;letter-spacing:0.3px">models</div><svg style="left:436px;top:112px;width:12px;height:12px" viewBox="0 0 12 12" ><path d="M3 0.6l5.6 5.4L3 11.4" fill="none" stroke="#a9a9a9" stroke-width="1.05"/></svg><div class="a" style="left:454px;top:110.5px;width:16px;height:16px;background:#ead55b;overflow:hidden"><div class="a" style="right:0.8px;bottom:-0.7px;font-family:'Liberation Sans';font-weight:bold;font-size:9.6px;line-height:9.6px;color:#1c1c1c;letter-spacing:-0.6px">JS</div></div><div class="a" style="left:475px;top:107px;height:22px;line-height:22px;font-size:13px;color:#a9a9a9;letter-spacing:0.3px">LikedEvents.js</div><svg style="left:565.5px;top:112px;width:12px;height:12px" viewBox="0 0 12 12" ><path d="M3 0.6l5.6 5.4L3 11.4" fill="none" stroke="#a9a9a9" stroke-width="1.05"/></svg><div class="a" style="left:582px;top:107px;height:22px;line-height:22px;font-size:13px;color:#a9a9a9">...</div><div class="ln" style="top:130px;color:#6f7680">1</div><div class="cl" style="top:130px"><span class="k">const</span><span class="w"> </span><span class="t">mongoose</span><span class="w"> = </span><span class="f">require</span><span class="b1">(</span><span class="s">"mongoose"</span><span class="b1">)</span><span class="w">;</span></div><div class="ln" style="top:148px;color:#6f7680">2</div><div class="a" style="left:367px;top:165px;width:602.5px;height:18px;background:#461c1b"></div><div class="a" style="left:482.2px;top:165px;width:7.2px;height:18px;background:#671d19"></div><div class="cl" style="top:166px"><span class="k">const</span><span class="w"> </span><span class="c">likedEvent</span><span class="c">s</span><span class="c">Schema</span><span class="w"> = </span><span class="k">new</span><span class="w"> mongoose.</span><span class="f">Schema</span><span class="w">({</span></div><div class="a" style="left:367px;top:183px;width:602.5px;height:18px;background:#393e2c"></div><div class="ln" style="top:184px;color:#6f7680">3</div><div class="cl" style="top:184px"><span class="k">const</span><span class="w"> </span><span class="c">likedEventSchema</span><span class="w"> = </span><span class="k">new</span><span class="w"> </span><span class="t">mongoose</span><span class="w">.</span><span class="t">Schema</span><span class="b1">(</span><span class="b2">{</span></div><div class="ln" style="top:202px;color:#6f7680">4</div><div class="cl" style="top:202px"><span class="w">  </span><span class="v">userId</span><span class="w">: </span><span class="b3">{</span></div><div class="ln" style="top:220px;color:#6f7680">5</div><div class="cl" style="top:220px"><span class="w">    </span><span class="t">type</span><span class="w">: </span><span class="t">mongoose</span><span class="w">.</span><span class="t">Schema</span><span class="w">.</span><span class="t">Types</span><span class="w">.</span><span class="t">ObjectId</span><span class="w">,</span></div><div class="ln" style="top:238px;color:#6f7680">6</div><div class="cl" style="top:238px"><span class="w">    </span><span class="v">required</span><span class="w">: </span><span class="k">true</span><span class="w">,</span></div><div class="ln" style="top:256px;color:#6f7680">7</div><div class="cl" style="top:256px"><span class="w">    </span><span class="v">ref</span><span class="w">: </span><span class="s">"User"</span><span class="w">,</span></div><div class="a" style="left:367px;top:273px;width:602.5px;height:18px;background:#4f5a30"></div><div class="ln" style="top:274px;color:#6f7680">8</div><div class="cl" style="top:274px"><span class="w">    </span><span class="v">index</span><span class="w">: </span><span class="k">true</span><span class="w">,  </span><span class="cm">// Added index on userId</span></div><div class="ln" style="top:292px;color:#6f7680">9</div><div class="cl" style="top:292px"><span class="w">  </span><span class="b3">}</span><span class="w">,</span></div><div class="ln" style="top:310px;color:#6f7680">10</div><div class="cl" style="top:310px"><span class="w">  </span><span class="v">eventId</span><span class="w">: </span><span class="b3">{</span></div><div class="ln" style="top:328px;color:#6f7680">11</div><div class="cl" style="top:328px"><span class="w">    </span><span class="t">type</span><span class="w">: </span><span class="t">mongoose</span><span class="w">.</span><span class="t">Schema</span><span class="w">.</span><span class="t">Types</span><span class="w">.</span><span class="t">ObjectId</span><span class="w">,</span></div><div class="ln" style="top:346px;color:#6f7680">12</div><div class="cl" style="top:346px"><span class="w">    </span><span class="v">required</span><span class="w">: </span><span class="k">true</span><span class="w">,</span></div><div class="ln" style="top:364px;color:#6f7680">13</div><div class="cl" style="top:364px"><span class="w">    </span><span class="v">ref</span><span class="w">: </span><span class="s">"ServiceProviderDetails"</span><span class="w">,</span></div><div class="a" style="left:367px;top:381px;width:602.5px;height:18px;background:#4f5a30"></div><div class="ln" style="top:382px;color:#6f7680">14</div><div class="cl" style="top:382px"><span class="w">    </span><span class="v">index</span><span class="w">: </span><span class="k">true</span><span class="w">,  </span><span class="cm">// Added index on eventId</span></div><div class="ln" style="top:400px;color:#6f7680">15</div><div class="cl" style="top:400px"><span class="w">  </span><span class="b3">}</span><span class="w">,</span></div><div class="ln" style="top:418px;color:#6f7680">16</div><div class="cl" style="top:418px"><span class="w">  </span><span class="v">likedAt</span><span class="w">: </span><span class="b3">{</span></div><div class="ln" style="top:436px;color:#6f7680">17</div><div class="cl" style="top:436px"><span class="w">    </span><span class="t">type</span><span class="w">: </span><span class="t">Date</span><span class="w">,</span></div><div class="a" style="left:367px;top:453px;width:602.5px;height:18px;background:#461c1b"></div><div class="a" style="left:395.8px;top:453px;width:129.6px;height:18px;background:#671d19"></div><div class="cl" style="top:454px"><span class="w">    </span><span class="v">default</span><span class="w">: </span><span class="v">Date</span><span class="w">.</span><span class="v">now</span><span class="w">,</span></div><div class="a" style="left:367px;top:471px;width:602.5px;height:18px;background:#393e2c"></div><div class="a" style="left:395.8px;top:471px;width:309.6px;height:18px;background:#4f5a30"></div><div class="ln" style="top:472px;color:#6f7680">18</div><div class="cl" style="top:472px"><span class="w">    </span><span class="v">immutable</span><span class="w">: </span><span class="k">true</span><span class="w">,  </span><span class="cm">// Made likedAt immutable</span></div><div class="ln" style="top:490px;color:#6f7680">19</div><div class="cl" style="top:490px"><span class="w">  </span><span class="b3">}</span><span class="w">,</span></div><div class="a" style="left:367px;top:507px;width:602.5px;height:18px;background:#4f5a30"></div><div class="ln" style="top:508px;color:#6f7680">20</div><div class="cl" style="top:508px"><span class="b2">}</span><span class="w">, </span><span class="b2">{</span></div><div class="a" style="left:367px;top:525px;width:602.5px;height:18px;background:#4f5a30"></div><div class="ln" style="top:526px;color:#6f7680">21</div><div class="cl" style="top:526px"><span class="w">  </span><span class="v">timestamps</span><span class="w">: </span><span class="k">true</span><span class="w">,  </span><span class="cm">// Added timestamps option</span></div><div class="a" style="left:367px;top:543px;width:602.5px;height:18px;background:#4f5a30"></div><div class="ln" style="top:544px;color:#6f7680">22</div><div class="cl" style="top:544px"><span class="w">  </span><span class="v">versionKey</span><span class="w">: </span><span class="k">false</span><span class="w">,  </span><span class="cm">// Disabled versionKey</span></div><div class="ln" style="top:562px;color:#6f7680">23</div><div class="cl" style="top:562px"><span class="b2">}</span><span class="b1">)</span><span class="w">;</span></div><div class="ln" style="top:580px;color:#6f7680">24</div><div class="a" style="left:367px;top:597px;width:602.5px;height:18px;background:#461c1b"></div><div class="a" style="left:676.6px;top:597px;width:7.2px;height:18px;background:#671d19"></div><div class="a" style="left:777.4000000000001px;top:597px;width:7.2px;height:18px;background:#671d19"></div><div class="cl" style="top:598px"><span class="t">module</span><span class="w">.</span><span class="t">exports</span><span class="w"> = </span><span class="v">mongoose</span><span class="w">.</span><span class="f">model</span><span class="w">(</span><span class="s">"LikedEvent</span><span class="s">s</span><span class="s">"</span><span class="w">, </span><span class="v">likedEvent</span><span class="v">s</span><span class="v">Schema</span><span class="w">);</span></div><div class="a" style="left:367px;top:615px;width:602.5px;height:18px;background:#4f5a30"></div><div class="ln" style="top:616px;color:#6f7680">25</div><div class="cl" style="top:616px"><span class="c">likedEventSchema</span><span class="w">.</span><span class="f">index</span><span class="b1">(</span><span class="b2">{</span><span class="w"> </span><span class="v">userId</span><span class="w">: </span><span class="n">1</span><span class="w">, </span><span class="v">eventId</span><span class="w">: </span><span class="n">1</span><span class="w"> </span><span class="b2">}</span><span class="w">, </span><span class="b2">{</span><span class="w"> </span><span class="v">unique</span><span class="w">: </span><span class="k">true</span><span class="w"> </span><span class="b2">}</span><span class="b1">)</span><span class="w">;  </span><span class="cm">// Added compound index</span></div><div class="a" style="left:367px;top:633px;width:602.5px;height:18px;background:#4f5a30"></div><div class="ln" style="top:634px;color:#6f7680">26</div><div class="a" style="left:367px;top:651px;width:602.5px;height:18px;background:#393e2c"></div><div class="ln" style="top:652px;color:#6f7680">27</div><div class="cl" style="top:652px"><span class="t">module</span><span class="w">.</span><span class="t">exports</span><span class="w"> = </span><span class="t">mongoose</span><span class="w">.</span><span class="f">model</span><span class="b1">(</span><span class="s">"LikedEvent"</span><span class="w">, </span><span class="c">likedEventSchema</span><span class="b1">)</span><span class="w">;</span></div><div class="a" style="left:367px;top:669px;width:600.5px;height:16px;border:1px solid #2a2a2a"></div><div class="ln" style="top:670px;color:#cccccc">28</div><div class="a" style="left:367px;top:201px;width:1px;height:306px;background:#404040"></div><div class="a" style="left:381.4px;top:219px;width:1px;height:72px;background:#404040"></div><div class="a" style="left:381.4px;top:327px;width:1px;height:72px;background:#404040"></div><div class="a" style="left:381.4px;top:435px;width:1px;height:54px;background:#404040"></div><div class="a" style="left:367px;top:525px;width:1px;height:36px;background:#404040"></div><div class="a" style="left:490.4px;top:143px;width:12px;height:2px;background-image:radial-gradient(circle,#bbbbbb 0.8px,transparent 1px);background-size:4px 2px"></div><div class="a" style="left:969.5px;top:129px;width:92.5px;height:831px;background:#1f1f1f;box-shadow:-3px 0 4px -2px #000"></div><div class="a mono" style="left:974px;top:129px;font-size:12px;line-height:18px;transform-origin:0 0;transform:scale(0.1389,0.1111);font-weight:bold;opacity:1"><div style="height:18px;white-space:pre"><span class="k">const</span><span class="w"> </span><span class="t">mongoose</span><span class="w"> = </span><span class="f">require</span><span class="b1">(</span><span class="s">"mongoose"</span><span class="b1">)</span><span class="w">;</span></div><div style="height:18px;white-space:pre"> </div><div style="height:18px;white-space:pre"><span class="k">const</span><span class="w"> </span><span class="c">likedEventSchema</span><span class="w"> = </span><span class="k">new</span><span class="w"> </span><span class="t">mongoose</span><span class="w">.</span><span class="t">Schema</span><span class="b1">(</span><span class="b2">{</span></div><div style="height:18px;white-space:pre"><span class="w">  </span><span class="v">userId</span><span class="w">: </span><span class="b3">{</span></div><div style="height:18px;white-space:pre"><span class="w">    </span><span class="t">type</span><span class="w">: </span><span class="t">mongoose</span><span class="w">.</span><span class="t">Schema</span><span class="w">.</span><span class="t">Types</span><span class="w">.</span><span class="t">ObjectId</span><span class="w">,</span></div><div style="height:18px;white-space:pre"><span class="w">    </span><span class="v">required</span><span class="w">: </span><span class="k">true</span><span class="w">,</span></div><div style="height:18px;white-space:pre"><span class="w">    </span><span class="v">ref</span><span class="w">: </span><span class="s">"User"</span><span class="w">,</span></div><div style="height:18px;white-space:pre"><span class="w">    </span><span class="v">index</span><span class="w">: </span><span class="k">true</span><span class="w">,  </span><span class="cm">// Added index on userId</span></div><div style="height:18px;white-space:pre"><span class="w">  </span><span class="b3">}</span><span class="w">,</span></div><div style="height:18px;white-space:pre"><span class="w">  </span><span class="v">eventId</span><span class="w">: </span><span class="b3">{</span></div><div style="height:18px;white-space:pre"><span class="w">    </span><span class="t">type</span><span class="w">: </span><span class="t">mongoose</span><span class="w">.</span><span class="t">Schema</span><span class="w">.</span><span class="t">Types</span><span class="w">.</span><span class="t">ObjectId</span><span class="w">,</span></div><div style="height:18px;white-space:pre"><span class="w">    </span><span class="v">required</span><span class="w">: </span><span class="k">true</span><span class="w">,</span></div><div style="height:18px;white-space:pre"><span class="w">    </span><span class="v">ref</span><span class="w">: </span><span class="s">"ServiceProviderDetails"</span><span class="w">,</span></div><div style="height:18px;white-space:pre"><span class="w">    </span><span class="v">index</span><span class="w">: </span><span class="k">true</span><span class="w">,  </span><span class="cm">// Added index on eventId</span></div><div style="height:18px;white-space:pre"><span class="w">  </span><span class="b3">}</span><span class="w">,</span></div><div style="height:18px;white-space:pre"><span class="w">  </span><span class="v">likedAt</span><span class="w">: </span><span class="b3">{</span></div><div style="height:18px;white-space:pre"><span class="w">    </span><span class="t">type</span><span class="w">: </span><span class="t">Date</span><span class="w">,</span></div><div style="height:18px;white-space:pre"><span class="w">    </span><span class="v">immutable</span><span class="w">: </span><span class="k">true</span><span class="w">,  </span><span class="cm">// Made likedAt immutable</span></div><div style="height:18px;white-space:pre"><span class="w">  </span><span class="b3">}</span><span class="w">,</span></div><div style="height:18px;white-space:pre"><span class="b2">}</span><span class="w">, </span><span class="b2">{</span></div><div style="height:18px;white-space:pre"><span class="w">  </span><span class="v">timestamps</span><span class="w">: </span><span class="k">true</span><span class="w">,  </span><span class="cm">// Added timestamps option</span></div><div style="height:18px;white-space:pre"><span class="w">  </span><span class="v">versionKey</span><span class="w">: </span><span class="k">false</span><span class="w">,  </span><span class="cm">// Disabled versionKey</span></div><div style="height:18px;white-space:pre"><span class="b2">}</span><span class="b1">)</span><span class="w">;</span></div><div style="height:18px;white-space:pre"> </div><div style="height:18px;white-space:pre"><span class="c">likedEventSchema</span><span class="w">.</span><span class="f">index</span><span class="b1">(</span><span class="b2">{</span><span class="w"> </span><span class="v">userId</span><span class="w">: </span><span class="n">1</span><span class="w">, </span><span class="v">eventId</span><span class="w">: </span><span class="n">1</span><span class="w"> </span><span class="b2">}</span><span class="w">, </span><span class="b2">{</span><span class="w"> </span><span class="v">unique</span><span class="w">: </span><span class="k">true</span><span class="w"> </span><span class="b2">}</span><span class="b1">)</span><span class="w">;  </span><span class="cm">// Added compound index</span></div><div style="height:18px;white-space:pre"> </div><div style="height:18px;white-space:pre"><span class="t">module</span><span class="w">.</span><span class="t">exports</span><span class="w"> = </span><span class="t">mongoose</span><span class="w">.</span><span class="f">model</span><span class="b1">(</span><span class="s">"LikedEvent"</span><span class="w">, </span><span class="c">likedEventSchema</span><span class="b1">)</span><span class="w">;</span></div><div style="height:18px;white-space:pre"> </div></div><div class="a" style="left:971px;top:133px;width:1.2px;height:2px;background:#3376cd"></div><div class="a" style="left:971px;top:143px;width:1.2px;height:2px;background:#529e4e"></div><div class="a" style="left:971px;top:155px;width:1.2px;height:2px;background:#529e4e"></div><div class="a" style="left:971px;top:163px;width:1.2px;height:2px;background:#3376cd"></div><div class="a" style="left:971px;top:167px;width:1.2px;height:6px;background:#529e4e"></div><div class="a" style="left:971px;top:177px;width:1.2px;height:2px;background:#3376cd"></div><div class="a" style="left:971px;top:181px;width:1.2px;height:2px;background:#3376cd"></div><div class="a" style="left:1062px;top:129px;width:14px;height:831px;background:#1f1f1f;border-left:1px solid #262626"></div><div class="a" style="left:1062px;top:129px;width:14px;height:502.5px;background:#434343"></div><div class="a" style="left:1062.5px;top:161.8px;width:4.5px;height:10.599999999999994px;background:#3a5f93"></div><div class="a" style="left:1062.5px;top:216px;width:4.5px;height:11px;background:#4f7a4e"></div><div class="a" style="left:1062.5px;top:281.6px;width:4.5px;height:10.399999999999977px;background:#4f7a4e"></div><div class="a" style="left:1062.5px;top:336px;width:4.5px;height:11px;background:#3a5f93"></div><div class="a" style="left:1062.5px;top:358px;width:4.5px;height:32.5px;background:#4f7a4e"></div><div class="a" style="left:1062.5px;top:423.8px;width:4.5px;height:31.19999999999999px;background:#3a5f93"></div><div class="a" style="left:1062px;top:455px;width:14px;height:2px;background:#9a9a9a"></div><div class="a" style="left:367px;top:948px;width:486px;height:10px;background:#424242"></div><div class="a" style="left:831px;top:908px;width:221px;height:27.5px;background:#3376cd;border-radius:2px"></div><div class="a" style="left:838px;top:908px;height:27.5px;line-height:27.5px;font-size:13px;color:#ffffff;letter-spacing:-0.1px">Keep</div><div class="a" style="left:876.5px;top:908px;height:27.5px;line-height:27.5px;font-size:13px;color:#ffffff;letter-spacing:-0.1px">Undo</div><svg style="left:918px;top:913px;width:17px;height:17px" viewBox="0 0 17 17" ><path d="M3 1.2h7.4l3.8 3.8v10.2c0 .4-.3.6-.6.6H3c-.4 0-.6-.3-.6-.6V1.8c0-.4.3-.6.6-.6z" fill="none" stroke="#fff" stroke-width="1.05"/><path d="M8.4 4.6v5M5.9 7.1h5M5.9 12.2h5" stroke="#fff" stroke-width="1.05"/></svg><div class="a" style="left:941.5px;top:912px;width:1px;height:19px;background:#6f9be0"></div><div class="a" style="left:955.5px;top:908px;height:27.5px;line-height:27.5px;font-size:13px;color:#ffffff;letter-spacing:0.3px">6 of 6</div><svg style="left:1005px;top:913.5px;width:16px;height:17px" viewBox="0 0 16 17" ><path d="M8 16V1.6M1.6 8L8 1.6 14.4 8" fill="none" stroke="#fff" stroke-width="1.1"/></svg><svg style="left:1031px;top:913.5px;width:16px;height:17px" viewBox="0 0 16 17" ><path d="M8 1v14.4M1.6 9L8 15.4 14.4 9" fill="none" stroke="#fff" stroke-width="1.1"/></svg><div class="a" style="left:1077px;top:72px;width:435px;height:888px;background:#181818"></div><div class="a" style="left:1101px;top:100px;width:385px;height:153.5px;border:1px solid #333333;border-radius:5px;background:#1f1f1f"></div><div class="a" style="left:1077px;top:72px;width:435px;height:35px;background:#181818"></div><div class="a" style="left:1097px;top:80px;height:20px;line-height:20px;font-size:11px;color:#e0e0e0;letter-spacing:0.3px">CHAT</div><div class="a" style="left:1095px;top:99.5px;width:34px;height:1.5px;background:#3376cd"></div><svg style="left:1339px;top:82.3px;width:17px;height:17px" viewBox="0 0 17 17" ><path d="M8.5 0.8v15.4M0.8 8.5h15.4" stroke="#cccccc" stroke-width="1.15"/></svg><svg style="left:1364.5px;top:82.5px;width:18px;height:18px" viewBox="0 0 18 18" ><path d="M3.6 4.2A7.4 7.4 0 1 1 1.8 9.6" fill="none" stroke="#cccccc" stroke-width="1.15"/><path d="M1.4 1.6v4.4h4.4" fill="none" stroke="#cccccc" stroke-width="1.15"/><path d="M9.2 5v4.4l3 2.6" fill="none" stroke="#cccccc" stroke-width="1.15"/></svg><svg style="left:1391px;top:82.5px;width:18px;height:18px" viewBox="0 0 18 18" ><path d="M15.22 7.51 L17.33 7.95 L17.33 10.05 L15.22 10.49 L14.46 12.34 L15.64 14.15 L14.15 15.64 L12.34 14.46 L10.49 15.22 L10.05 17.33 L7.95 17.33 L7.51 15.22 L5.66 14.46 L3.85 15.64 L2.36 14.15 L3.54 12.34 L2.78 10.49 L0.67 10.05 L0.67 7.95 L2.78 7.51 L3.54 5.66 L2.36 3.85 L3.85 2.36 L5.66 3.54 L7.51 2.78 L7.95 0.67 L10.05 0.67 L10.49 2.78 L12.34 3.54 L14.15 2.36 L15.64 3.85 L14.46 5.66Z" fill="none" stroke="#cccccc" stroke-width="1.1" stroke-linejoin="round"/><circle cx="9" cy="9" r="2.3" fill="none" stroke="#cccccc" stroke-width="1.1"/></svg><svg style="left:1418px;top:83px;width:16px;height:16px" viewBox="0 0 16 16" ><circle cx="1.6" cy="8.6" r="1.15" fill="#cccccc"/><circle cx="7.9" cy="8.6" r="1.15" fill="#cccccc"/><circle cx="14.2" cy="8.6" r="1.15" fill="#cccccc"/></svg><div class="a" style="left:1443px;top:81.5px;width:1px;height:15.5px;background:#4a4a4a"></div><svg style="left:1457.5px;top:82px;width:15px;height:15px" viewBox="0 0 15 15" ><path d="M0.6 4.6V0.6H4.6M10.4 0.6h4V4.6M14.4 10.4v4H10.4M4.6 14.4H0.6V10.4" fill="none" stroke="#cccccc" stroke-width="1.2"/></svg><svg style="left:1485px;top:83.7px;width:12px;height:12px" viewBox="0 0 12 12" ><path d="M0.6 0.6l10.6 10.6M11.2 0.6L0.6 11.2" stroke="#cccccc" stroke-width="1.15"/></svg><div class="a mono" style="left:1110px;top:109.2px;height:17px;line-height:17px;font-size:12px;color:#cccccc;white-space:pre">Planning changes...</div><div class="a mono" style="left:1110px;top:126.2px;height:17px;line-height:17px;font-size:12px;color:#cccccc;white-space:pre">Plan ready</div><div class="a mono" style="left:1110px;top:143.2px;height:17px;line-height:17px;font-size:12px;color:#cccccc;white-space:pre"> Generating code...</div><div class="a mono" style="left:1110px;top:160.2px;height:17px;line-height:17px;font-size:12px;color:#cccccc;white-space:pre">Completed in 105.8s</div><div class="a mono" style="left:1110px;top:177.2px;height:17px;line-height:17px;font-size:12px;color:#cccccc;white-space:pre"><span style="display:inline-block;width:12px;height:12px;border-radius:2.5px;background:#54a83f;vertical-align:-1.5px;position:relative"><svg style="left:0;top:0;width:12px;height:12px" viewBox="0 0 13 13"><path d="M3 6.8l2.4 2.6L10.2 3.6" fill="none" stroke="#fff" stroke-width="1.9" stroke-linecap="round" stroke-linejoin="round"/></svg></span> Pipeline completed successfully</div><div class="a mono" style="left:1110px;top:194.2px;height:17px;line-height:17px;font-size:12px;color:#cccccc;white-space:pre">Changes saved successfully!</div><div class="a mono" style="left:1110px;top:211.2px;height:17px;line-height:17px;font-size:12px;color:#cccccc;white-space:pre">Received final result from backend</div><div class="a mono" style="left:1110px;top:228.2px;height:17px;line-height:17px;font-size:12px;color:#cccccc;white-space:pre">Stream completed</div><div class="a" style="left:1105px;top:273.9px;height:15.6px;line-height:15.6px;font-size:13px;color:#cccccc;white-space:pre;letter-spacing:0.3px;">Generating code...</div><div class="a" style="left:1101px;top:307.5px;width:385px;height:272.5px;border:1px solid #333333;border-radius:5px;background:#1f1f1f;overflow:hidden"><div class="a" style="left:0;top:0;width:385px;height:32px;background:#181818;border-bottom:1px solid #333333"></div></div><div class="a" style="left:1114px;top:315.6px;height:15.6px;line-height:15.6px;font-size:13px;color:#cccccc;white-space:pre;letter-spacing:0.3px;font-weight:bold;letter-spacing:0.2px">code</div><div class="a mono" style="left:1110px;top:351.0px;height:17px;line-height:17px;font-size:12px;color:#cccccc;white-space:pre">Starting edit request...</div><div class="a mono" style="left:1110px;top:368.0px;height:17px;line-height:17px;font-size:12px;color:#cccccc;white-space:pre">Connecting to server...</div><div class="a mono" style="left:1110px;top:385.0px;height:17px;line-height:17px;font-size:12px;color:#cccccc;white-space:pre">Analyzing your request...</div><div class="a mono" style="left:1110px;top:402.0px;height:17px;line-height:17px;font-size:12px;color:#cccccc;white-space:pre">Analyzing dependencies...</div><div class="a mono" style="left:1110px;top:419.0px;height:17px;line-height:17px;font-size:12px;color:#cccccc;white-space:pre">Planning changes...</div><div class="a mono" style="left:1110px;top:436.0px;height:17px;line-height:17px;font-size:12px;color:#cccccc;white-space:pre">Plan ready</div><div class="a mono" style="left:1110px;top:453.0px;height:17px;line-height:17px;font-size:12px;color:#cccccc;white-space:pre"> Generating code...</div><div class="a mono" style="left:1110px;top:470.0px;height:17px;line-height:17px;font-size:12px;color:#cccccc;white-space:pre">Completed in 105.8s</div><div class="a mono" style="left:1110px;top:487.0px;height:17px;line-height:17px;font-size:12px;color:#cccccc;white-space:pre"><span style="display:inline-block;width:12px;height:12px;border-radius:2.5px;background:#54a83f;vertical-align:-1.5px;position:relative"><svg style="left:0;top:0;width:12px;height:12px" viewBox="0 0 13 13"><path d="M3 6.8l2.4 2.6L10.2 3.6" fill="none" stroke="#fff" stroke-width="1.9" stroke-linecap="round" stroke-linejoin="round"/></svg></span> Pipeline completed successfully</div><div class="a mono" style="left:1110px;top:504.0px;height:17px;line-height:17px;font-size:12px;color:#cccccc;white-space:pre">Changes saved successfully!</div><div class="a mono" style="left:1110px;top:521.0px;height:17px;line-height:17px;font-size:12px;color:#cccccc;white-space:pre">Received final result from backend</div><div class="a mono" style="left:1110px;top:538.0px;height:17px;line-height:17px;font-size:12px;color:#cccccc;white-space:pre">Stream completed</div><div class="a mono" style="left:1110px;top:555.0px;height:17px;line-height:17px;font-size:12px;color:#cccccc;white-space:pre">Request completed successfully</div><div class="a" style="left:1100.8px;top:599px;width:115.2px;height:18px;border-radius:4px;background:#313131"></div><div class="a mono" style="left:1103.5px;top:599px;height:18px;line-height:18px;font-size:13px;color:#d4d4d4;letter-spacing:0.05px">LikedEvents.js</div><div class="a" style="left:1101.4px;top:636.9px;height:15.6px;line-height:15.6px;font-size:13px;color:#cccccc;white-space:pre;letter-spacing:0.3px;">Applying edits one file at a time...</div><div class="a" style="left:1125.4px;top:671.9px;height:15.6px;line-height:15.6px;font-size:13px;color:#cccccc;white-space:pre;letter-spacing:0.3px;">Looking for relevant files — Scanning the project for the</div><div class="a" style="left:1125.4px;top:691.4px;height:15.6px;line-height:15.6px;font-size:13px;color:#cccccc;white-space:pre;letter-spacing:0.3px;">best place to apply changes...</div><div class="a" style="left:1125.4px;top:710.9px;height:15.6px;line-height:15.6px;font-size:13px;color:#cccccc;white-space:pre;letter-spacing:0.3px;">Planning changes — Plan ready</div><div class="a" style="left:1125.4px;top:730.4px;height:15.6px;line-height:15.6px;font-size:13px;color:#cccccc;white-space:pre;letter-spacing:0.3px;">Editing files — Updated </div><div class="a" style="left:1113.5px;top:678.4px;width:3.8px;height:3.8px;border-radius:50%;background:#cccccc"></div><div class="a" style="left:1113.5px;top:717.4px;width:3.8px;height:3.8px;border-radius:50%;background:#cccccc"></div><div class="a" style="left:1113.5px;top:736.9px;width:3.8px;height:3.8px;border-radius:50%;background:#cccccc"></div><div class="a" style="left:1269.7px;top:728.8px;width:115.2px;height:17.7px;border-radius:4px;background:#313131"></div><div class="a mono" style="left:1272.8px;top:728.8px;height:17.7px;line-height:17.7px;font-size:13px;color:#d4d4d4;letter-spacing:0.05px">LikedEvents.js</div><svg style="left:1105px;top:755.5px;width:18px;height:18px" viewBox="0 0 18 18" ><path d="M4.2 3.4A6.6 6.6 0 1 0 9 2.4" fill="none" stroke="#cccccc" stroke-width="1.1"/><path d="M2 2.6h3.2v3.2" fill="none" stroke="#cccccc" stroke-width="1.1"/></svg><svg style="left:1132px;top:755.5px;width:16px;height:18px" viewBox="0 0 16 18" ><path d="M3.6 1.4L1.6 4.6l3.2 1.8" fill="none" stroke="#cccccc" stroke-width="1.1"/><path d="M1.8 4.6c3.6-1.6 9-.6 9.8 3.6.6 3.4-1.6 6.2-5.6 9.2" fill="none" stroke="#cccccc" stroke-width="1.1"/></svg><div class="a" style="left:1082.5px;top:788.5px;width:422.5px;height:64.5px;border:1px solid #363636;border-bottom:none;border-radius:6px 6px 0 0;background:#1f1f1f"></div><svg style="left:1098px;top:797.5px;width:14px;height:14px" viewBox="0 0 14 14" ><path d="M1.2 4.2l5.8 5.8 5.8-5.8" fill="none" stroke="#cccccc" stroke-width="1.05"/></svg><div class="a" style="left:1119px;top:796.3px;height:14.4px;line-height:14.4px;font-size:12px;color:#cccccc;white-space:pre;letter-spacing:0.3px;letter-spacing:-0.1px">1 file changed</div><div class="a" style="left:1197.5px;top:796.3px;height:14.4px;line-height:14.4px;font-size:12px;color:#6db35a;white-space:pre;letter-spacing:0.3px;letter-spacing:-0.2px">+10</div><div class="a" style="left:1222.5px;top:796.3px;height:14.4px;line-height:14.4px;font-size:12px;color:#e2706a;white-space:pre;letter-spacing:0.3px;letter-spacing:0">-3</div><div class="a" style="left:1377.7px;top:795px;width:40px;height:17px;border-radius:2px;background:#3376cd;color:#fff;font-size:12px;line-height:17px;text-align:center;letter-spacing:0.2px">Keep</div><div class="a" style="left:1424px;top:795px;width:40.5px;height:16px;border-radius:2px;background:#313131;border:0.5px solid #454545;color:#cccccc;font-size:11.5px;line-height:16px;text-align:center;letter-spacing:0.2px">Undo</div><svg style="left:1474.5px;top:796px;width:19px;height:16px" viewBox="0 0 19 16" ><path d="M1.6 0.4v14M7.8 2.5v6.3M4.7 5.7h6.3M4.7 11.8h6.3" stroke="#cccccc" stroke-width="1.1"/><path d="M12 0.6c1.6 1 3.3 2 3.3 3.4v10.4M16.1 0.6c.8.6 1.6 1.6 1.6 2.8v11" fill="none" stroke="#cccccc" stroke-width="1.1"/></svg><div class="a" style="left:1094px;top:817px;width:16px;height:16px;background:#ead55b;overflow:hidden"><div class="a" style="right:0.8px;bottom:-0.7px;font-family:'Liberation Sans';font-weight:bold;font-size:9.6px;line-height:9.6px;color:#1c1c1c;letter-spacing:-0.6px">JS</div></div><div class="a" style="left:1116.3px;top:817.5px;height:15.6px;line-height:15.6px;font-size:13px;color:#cccccc;white-space:pre;letter-spacing:0.3px;">LikedEvents.js</div><div class="a" style="left:1208.8px;top:818.4px;height:14.4px;line-height:14.4px;font-size:12px;color:#9d9d9d;white-space:pre;letter-spacing:0.3px;">Backend/models</div><div class="a" style="left:1459px;top:818.4px;height:14.4px;line-height:14.4px;font-size:12px;color:#6db35a;white-space:pre;letter-spacing:0.3px;">+10</div><div class="a" style="left:1482.5px;top:818.4px;height:14.4px;line-height:14.4px;font-size:12px;color:#e2706a;white-space:pre;letter-spacing:0.3px;letter-spacing:0">-3</div><div class="a" style="left:1087px;top:842.5px;width:413px;height:110px;border:1.5px solid #464646;border-radius:14px;background:#232323"></div><div class="a" style="left:1105px;top:859.9px;height:15.6px;line-height:15.6px;font-size:13px;color:#8e8e8e;white-space:pre;letter-spacing:0.3px;">Add context (#), extensions (@), commands (/)</div><div class="a" style="left:1109px;top:909.9px;height:15.6px;line-height:15.6px;font-size:13px;color:#cccccc;white-space:pre;letter-spacing:0.3px;letter-spacing:-0.2px">Agent</div><svg style="left:1145.5px;top:914px;width:10px;height:8px" viewBox="0 0 10 8" ><path d="M1 1.6l4 4 4-4" fill="none" stroke="#cccccc" stroke-width="1"/></svg><svg style="left:1471.5px;top:914px;width:19px;height:17px" viewBox="0 0 19 17" ><path d="M1.4 1.2L17.8 8.5 1.4 15.8 3.4 8.5z" fill="none" stroke="#cccccc" stroke-width="1.1" stroke-linejoin="round"/><path d="M3.4 8.5h14.4" stroke="#cccccc" stroke-width="1.1"/></svg><div class="a" style="left:0;top:961px;width:34px;height:21px;background:#3376cd"></div><svg style="left:11px;top:963px;width:12px;height:16px" viewBox="0 0 12 16" ><path d="M1.6 6.2l4.6 4.6-4.6 4.6M10.6 1.4L6.4 5.6l4.2 4.2" fill="none" stroke="#fff" stroke-width="1.1"/></svg><svg style="left:42.5px;top:963.5px;width:12px;height:16px" viewBox="0 0 12 16" ><circle cx="2.6" cy="2.6" r="1.7" fill="none" stroke="#cccccc" stroke-width="1"/><circle cx="9.2" cy="5.2" r="1.7" fill="none" stroke="#cccccc" stroke-width="1"/><circle cx="2.6" cy="13" r="1.7" fill="none" stroke="#cccccc" stroke-width="1"/><path d="M2.6 4.3v7M9.2 6.9c0 2.4-1.8 3-3.8 3.3-1.6.2-2.6.7-2.8 1.4" fill="none" stroke="#cccccc" stroke-width="1"/></svg><div class="a" style="left:59.5px;top:961px;height:21px;line-height:21px;font-size:12px;color:#cccccc;letter-spacing:0.2px">main*</div><svg style="left:98.5px;top:964px;width:14px;height:14px" viewBox="0 0 14 14" ><path d="M12.2 5.2A5.4 5.4 0 0 0 2.4 4.4M1.8 8.8a5.4 5.4 0 0 0 9.8.8M2.2 1.4v3.2h3.2M11.8 12.6V9.4H8.6" fill="none" stroke="#cccccc" stroke-width="1"/></svg><svg style="left:128.5px;top:965px;width:13px;height:13px" viewBox="0 0 13 13" ><circle cx="6.5" cy="6.5" r="5.6" fill="none" stroke="#cccccc" stroke-width="1"/><path d="M4.3 4.3l4.4 4.4M8.7 4.3L4.3 8.7" stroke="#cccccc" stroke-width="1"/></svg><div class="a" style="left:145.5px;top:961px;height:21px;line-height:21px;font-size:12px;color:#cccccc">0</div><svg style="left:157.5px;top:964.5px;width:13px;height:13px" viewBox="0 0 13 13" ><path d="M6.5 1.2L12.2 11.8H0.8z" fill="none" stroke="#cccccc" stroke-width="1" stroke-linejoin="round"/><path d="M6.5 4.6v4M6.5 9.6v1.2" stroke="#cccccc" stroke-width="1"/></svg><div class="a" style="left:174px;top:961px;height:21px;line-height:21px;font-size:12px;color:#cccccc">0</div><div class="a" style="left:1077px;top:961px;height:21px;line-height:21px;font-size:12px;color:#cccccc;letter-spacing:0.3px">Ln 28, Col 1</div><div class="a" style="left:1162.3px;top:961px;height:21px;line-height:21px;font-size:12px;color:#cccccc;letter-spacing:0.3px">Spaces: 2</div><div class="a" style="left:1234px;top:961px;height:21px;line-height:21px;font-size:12px;color:#cccccc;letter-spacing:0.3px">UTF-8</div><div class="a" style="left:1306.8px;top:961px;height:21px;line-height:21px;font-size:12px;color:#cccccc;letter-spacing:0.3px">JavaScript</div><div class="a" style="left:1399.7px;top:961px;height:21px;line-height:21px;font-size:12px;color:#cccccc;letter-spacing:0.3px">GIDE: 2d 2h</div><div class="a" style="left:1287.5px;top:961px;height:21px;line-height:21px;font-size:11.5px;color:#cccccc;-webkit-text-stroke:0;white-space:pre">{ }</div><svg style="left:1383px;top:965px;width:12px;height:12px" viewBox="0 0 12 12" ><path d="M1 6.4l3.2 3.6L11 1.6" fill="none" stroke="#cccccc" stroke-width="1.05"/></svg><svg style="left:1484px;top:964px;width:12px;height:14px" viewBox="0 0 12 14" ><path d="M6 1.4c-2.4 0-3.8 1.8-3.8 4v3.8L1 11h10L9.8 9.2V5.4c0-2.2-1.4-4-3.8-4z" fill="none" stroke="#cccccc" stroke-width="1" stroke-linejoin="round"/><path d="M4.6 12.4c.3.8.8 1.2 1.4 1.2s1.1-.4 1.4-1.2" fill="none" stroke="#cccccc" stroke-width="1"/></svg></div></body></html>
